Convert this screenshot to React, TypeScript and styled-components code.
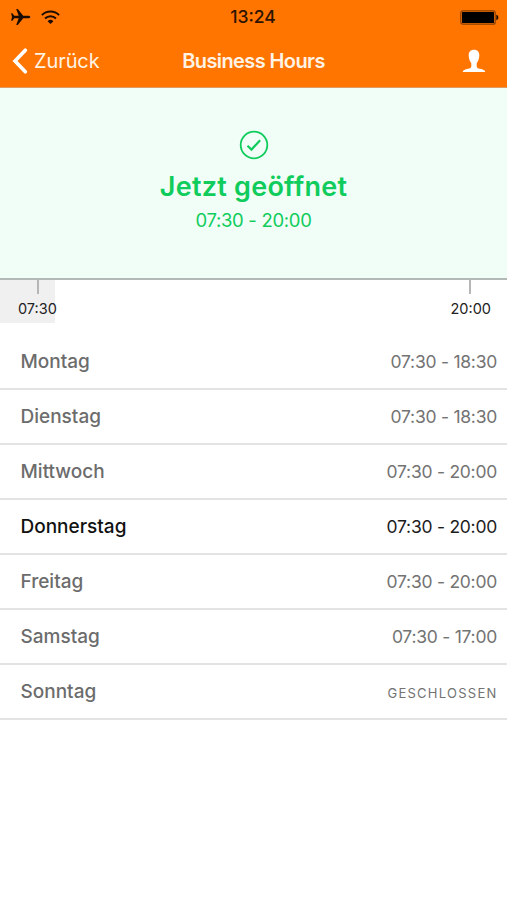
import React from "react";
import styled, { createGlobalStyle } from "styled-components";

const GlobalStyle = createGlobalStyle`
  * { box-sizing: border-box; }
  body {
    margin: 0;
    background: #fff;
    font-family: Inter, "Liberation Sans", sans-serif;
    -webkit-font-smoothing: antialiased;
  }
`;

const Screen = styled.main`
  height: 900px;
  overflow: hidden;
  background: #fff;
`;

const Header = styled.header`
  height: 88px;
  background: #ff7500;
  border-bottom: 1px solid #dd9a62;
`;

const StatusBar = styled.div`
  height: 34px;
  display: grid;
  grid-template-columns: 1fr auto 1fr;
  align-items: center;
  padding: 0 8px 0 10px;
`;

const StatusIcons = styled.div`
  display: flex;
  align-items: center;
  gap: 10px;
`;

const Clock = styled.time`
  margin-right: 3px;
  font-size: 17.5px;
  font-weight: 500;
  line-height: 34px;
  color: #2b1300;
`;

const Battery = styled.svg`
  justify-self: end;
`;

const NavBar = styled.nav`
  height: 54px;
  display: grid;
  grid-template-columns: 1fr auto 1fr;
  align-items: center;
  padding: 0 12px;
  color: #fff;
`;

const BackButton = styled.button`
  display: flex;
  align-items: center;
  gap: 6px;
  padding: 0;
  border: 0;
  background: none;
  color: #fff3e6;
  font: 400 20px/54px Inter, sans-serif;
  letter-spacing: -0.1px;
`;

const Title = styled.h1`
  margin: 0;
  font-size: 20px;
  font-weight: 600;
  letter-spacing: -0.6px;
  color: #fff3e6;
`;

const ProfileButton = styled.button`
  justify-self: end;
  display: flex;
  padding: 0 9px;
  border: 0;
  background: none;
`;

const Status = styled.section`
  height: 192px;
  display: flex;
  flex-direction: column;
  align-items: center;
  padding-top: 42px;
  background: #f0fef7;
  border-bottom: 2px solid #b3b9b6;
  color: #10cc5c;
`;

const StatusTitle = styled.h2`
  margin: 10px 0 0;
  font-size: 27px;
  line-height: 34px;
  font-weight: 600;
  letter-spacing: 0.25px;
`;

const StatusHours = styled.p`
  margin: 5px 0 0;
  font-size: 18.5px;
  line-height: 22px;
  letter-spacing: -0.3px;
`;

const Timeline = styled.div`
  height: 43px;
  display: flex;
  justify-content: space-between;
  padding: 0 16px 0 18px;
  background: linear-gradient(to right, #f1f0f0 55px, #fff 55px);
`;

const Mark = styled.div<{ $edge: "start" | "end" }>`
  display: flex;
  flex-direction: column;
  align-items: center;
  font-size: 14.5px;
  line-height: 18px;
  color: #222;

  &::before {
    content: "";
    width: 2px;
    height: 14px;
    margin: ${({ $edge }) => ($edge === "start" ? "0 0 6px 2px" : "0 2px 6px 0")};
    background: #b6b6b6;
  }
`;

const Week = styled.ul`
  margin: 12px 0 0;
  padding: 0;
  list-style: none;
`;

const DayRow = styled.li<{ $today: boolean }>`
  height: 55px;
  display: flex;
  align-items: center;
  justify-content: space-between;
  padding: 0 10px 0 20.5px;
  border-bottom: 2px solid #e3e3e3;
  color: ${({ $today }) => ($today ? "#111" : "#6c6c6c")};
`;

const Day = styled.span`
  padding-bottom: 1px;
  font-size: 19px;
  font-weight: 500;
`;

const Hours = styled.span<{ $closed: boolean; $today: boolean }>`
  padding-top: ${({ $closed }) => ($closed ? 2 : 0)}px;
  font-size: ${({ $closed }) => ($closed ? 13 : 17.5)}px;
  letter-spacing: ${({ $closed }) => ($closed ? 1.25 : -0.25)}px;
  margin-right: ${({ $closed }) => ($closed ? -0.5 : 0)}px;
  color: ${({ $today }) => ($today ? "#1c1c1c" : "#737373")};
`;

const week = [
  { day: "Montag", hours: "07:30 - 18:30" },
  { day: "Dienstag", hours: "07:30 - 18:30" },
  { day: "Mittwoch", hours: "07:30 - 20:00" },
  { day: "Donnerstag", hours: "07:30 - 20:00", today: true },
  { day: "Freitag", hours: "07:30 - 20:00" },
  { day: "Samstag", hours: "07:30 - 17:00" },
  { day: "Sonntag", hours: "GESCHLOSSEN", closed: true },
];

export default function App() {
  return (
    <Screen>
      <GlobalStyle />
      <Header>
        <StatusBar>
          <StatusIcons>
            <svg width="21" height="18" viewBox="0 0 21 18" fill="#1c0c00">
              <path d="M20.300 9c0-.8-1.100-1.300-2.600-1.300h-4.500L7.800 1H6.200l2.500 6.700H4.300L2.400 5.200H1.100L2 9l-.9 3.800h1.300l1.900-2.500h4.400L6.200 17h1.600l5.400-6.700h4.500c1.500 0 2.600-.5 2.600-1.300z" />
            </svg>
            <svg width="19" height="15" viewBox="0 0 19 15" fill="none" stroke="#1c0c00" strokeWidth="2">
              <path d="M.9 5.100a12.300 12.300 0 0 1 17.200 0M4 8.500a7.800 7.800 0 0 1 11 0" />
              <path d="M9.500 14.100 6.600 11.200a4.100 4.100 0 0 1 5.800 0z" fill="#1c0c00" stroke="none" />
            </svg>
          </StatusIcons>
          <Clock>13:24</Clock>
          <Battery width="39" height="15" viewBox="0 0 39 15">
            <rect x=".8" y=".8" width="34.4" height="13.4" rx="2" fill="none" stroke="#8a4000" strokeWidth="1.2" />
            <rect x="2" y="2" width="32" height="11" rx=".6" fill="#000" />
            <path d="M36.300 4.800c1.400.3 2 1.400 2 2.700s-.6 2.400-2 2.700z" fill="#1c0c00" />
          </Battery>
        </StatusBar>
        <NavBar>
          <BackButton>
            <svg width="16" height="26" viewBox="0 0 16 26" fill="none" stroke="#fff" strokeWidth="3.6" strokeLinecap="round">
              <path d="M13.300 2.200 3 13l10.300 10.800" />
            </svg>
            Zurück
          </BackButton>
          <Title>Business Hours</Title>
          <ProfileButton aria-label="Profil">
            <svg width="24" height="24" viewBox="0 0 24 24" fill="#fff">
              <path d="M12 .8c3.500 0 5.300 2.200 5.300 5.500 0 3.600-1.300 6.500-2.600 8v2.600c0 1.700 1.100 2.400 3.300 2.900 3 .7 5 1.400 5.300 3.300H.7c.3-1.900 2.300-2.600 5.300-3.300 2.200-.5 3.300-1.200 3.300-2.900v-2.600c-1.300-1.500-2.600-4.400-2.600-8C6.700 3 8.500.8 12 .8z" />
            </svg>
          </ProfileButton>
        </NavBar>
      </Header>
      <Status>
        <svg width="30" height="30" viewBox="0 0 30 30" fill="none" stroke="#10cc5c" strokeWidth="1.8">
          <circle cx="15" cy="15" r="13.3" />
          <path d="m8.500 15.800 4 3.800 8.600-9.300" strokeWidth="2.2" />
        </svg>
        <StatusTitle>Jetzt geöffnet</StatusTitle>
        <StatusHours>07:30 - 20:00</StatusHours>
      </Status>
      <Timeline>
        <Mark $edge="start">07:30</Mark>
        <Mark $edge="end">20:00</Mark>
      </Timeline>
      <Week>
        {week.map(({ day, hours, today = false, closed = false }) => (
          <DayRow key={day} $today={today}>
            <Day>{day}</Day>
            <Hours $closed={closed} $today={today}>{hours}</Hours>
          </DayRow>
        ))}
      </Week>
    </Screen>
  );
}
